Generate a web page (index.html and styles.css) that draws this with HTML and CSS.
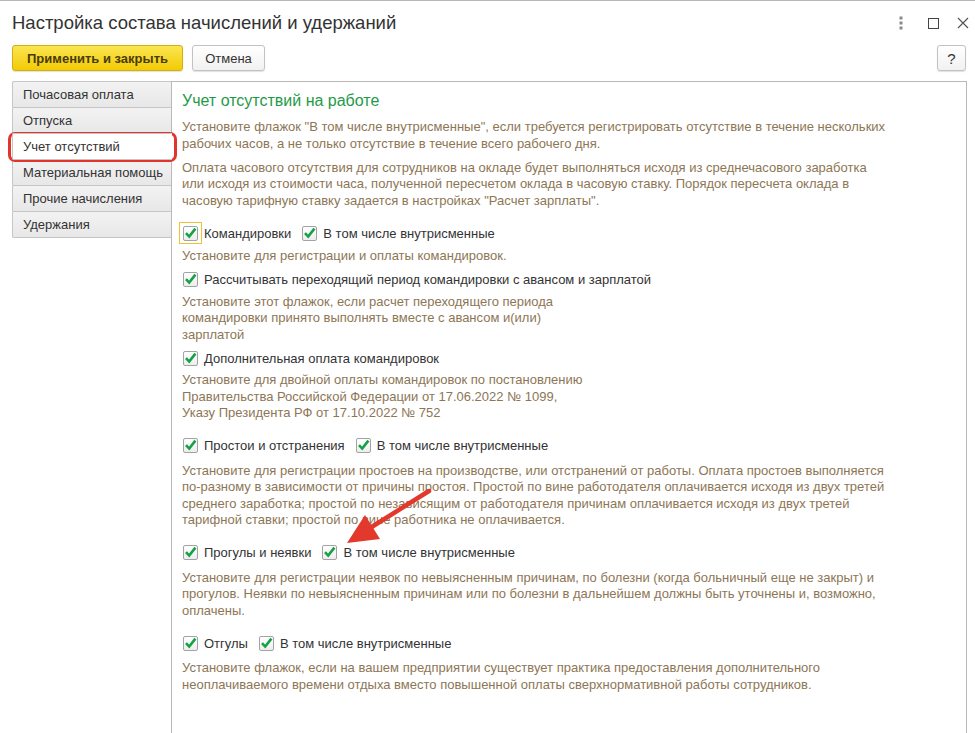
FILE: index.html
```html
<!DOCTYPE html>
<html lang="ru">
<head>
  <meta charset="UTF-8">
  <title>Настройка состава начислений и удержаний</title>
  <link rel="stylesheet" href="styles.css">
</head>
<body>
  <div class="window">
    <div class="titlebar">
      <h1>Настройка состава начислений и удержаний</h1>
      <div class="win-controls">
        <svg class="ico-more" width="6" height="14" viewBox="0 0 6 14">
          <rect x="1.5" y="0.5" width="3" height="3" fill="#8a8a8a"/>
          <rect x="1.5" y="5.5" width="3" height="3" fill="#8a8a8a"/>
          <rect x="1.5" y="10.5" width="3" height="3" fill="#8a8a8a"/>
        </svg>
        <span class="ico-max"></span>
        <svg class="ico-close" width="12" height="12" viewBox="0 0 12 12">
          <path d="M1 1 L11 11 M11 1 L1 11" stroke="#555" stroke-width="1.2"/>
        </svg>
      </div>
    </div>

    <div class="toolbar">
      <button class="btn btn-primary">Применить и закрыть</button>
      <button class="btn btn-cancel">Отмена</button>
      <button class="btn btn-help">?</button>
    </div>

    <div class="main">
      <ul class="tabs">
        <li class="tab">Почасовая оплата</li>
        <li class="tab">Отпуска</li>
        <li class="tab active">Учет отсутствий</li>
        <li class="tab">Материальная помощь</li>
        <li class="tab">Прочие начисления</li>
        <li class="tab">Удержания</li>
      </ul>

      <div class="panel">
        <h2>Учет отсутствий на работе</h2>
        <p class="note intro">Установите флажок "В том числе внутрисменные", если требуется регистрировать отсутствие в течение нескольких<br>рабочих часов, а не только отсутствие в течение всего рабочего дня.</p>
        <p class="note intro">Оплата часового отсутствия для сотрудников на окладе будет выполняться исходя из среднечасового заработка<br>или исходя из стоимости часа, полученной пересчетом оклада в часовую ставку. Порядок пересчета оклада в<br>часовую тарифную ставку задается в настройках "Расчет зарплаты".</p>

        <div class="group group-first">
          <div class="row">
            <span class="cb focus"><span class="box"><svg viewBox="0 0 15 15"><path d="M3 7.2 L6.2 10.6 L12.4 2.6"/></svg></span></span>
            <span class="label">Командировки</span>
            <span class="cb"><span class="box"><svg viewBox="0 0 15 15"><path d="M3 7.2 L6.2 10.6 L12.4 2.6"/></svg></span></span>
            <span class="label">В том числе внутрисменные</span>
          </div>
          <p class="note hint">Установите для регистрации и оплаты командировок.</p>

          <div class="row sub">
            <span class="cb"><span class="box"><svg viewBox="0 0 15 15"><path d="M3 7.2 L6.2 10.6 L12.4 2.6"/></svg></span></span>
            <span class="label">Рассчитывать переходящий период командировки с авансом и зарплатой</span>
          </div>
          <p class="note hint hint-tight">Установите этот флажок, если расчет переходящего периода<br>командировки принято выполнять вместе с авансом и(или)<br>зарплатой</p>

          <div class="row sub">
            <span class="cb"><span class="box"><svg viewBox="0 0 15 15"><path d="M3 7.2 L6.2 10.6 L12.4 2.6"/></svg></span></span>
            <span class="label">Дополнительная оплата командировок</span>
          </div>
          <p class="note hint hint-tight">Установите для двойной оплаты командировок по постановлению<br>Правительства Российской Федерации от 17.06.2022 № 1099,<br>Указу Президента РФ от 17.10.2022 № 752</p>
        </div>

        <div class="group">
          <div class="row">
            <span class="cb"><span class="box"><svg viewBox="0 0 15 15"><path d="M3 7.2 L6.2 10.6 L12.4 2.6"/></svg></span></span>
            <span class="label">Простои и отстранения</span>
            <span class="cb"><span class="box"><svg viewBox="0 0 15 15"><path d="M3 7.2 L6.2 10.6 L12.4 2.6"/></svg></span></span>
            <span class="label">В том числе внутрисменные</span>
          </div>
          <p class="note hint">Установите для регистрации простоев на производстве, или отстранений от работы. Оплата простоев выполняется<br>по-разному в зависимости от причины простоя. Простой по вине работодателя оплачивается исходя из двух третей<br>среднего заработка; простой по независящим от работодателя причинам оплачивается исходя из двух третей<br>тарифной ставки; простой по вине работника не оплачивается.</p>
        </div>

        <div class="group">
          <div class="row">
            <span class="cb"><span class="box"><svg viewBox="0 0 15 15"><path d="M3 7.2 L6.2 10.6 L12.4 2.6"/></svg></span></span>
            <span class="label">Прогулы и неявки</span>
            <span class="cb"><span class="box"><svg viewBox="0 0 15 15"><path d="M3 7.2 L6.2 10.6 L12.4 2.6"/></svg></span></span>
            <span class="label">В том числе внутрисменные</span>
          </div>
          <p class="note hint">Установите для регистрации неявок по невыясненным причинам, по болезни (когда больничный еще не закрыт) и<br>прогулов. Неявки по невыясненным причинам или по болезни в дальнейшем должны быть уточнены и, возможно,<br>оплачены.</p>
        </div>

        <div class="group">
          <div class="row">
            <span class="cb"><span class="box"><svg viewBox="0 0 15 15"><path d="M3 7.2 L6.2 10.6 L12.4 2.6"/></svg></span></span>
            <span class="label">Отгулы</span>
            <span class="cb"><span class="box"><svg viewBox="0 0 15 15"><path d="M3 7.2 L6.2 10.6 L12.4 2.6"/></svg></span></span>
            <span class="label">В том числе внутрисменные</span>
          </div>
          <p class="note hint">Установите флажок, если на вашем предприятии существует практика предоставления дополнительного<br>неоплачиваемого времени отдыха вместо повышенной оплаты сверхнормативной работы сотрудников.</p>
        </div>
      </div>
    </div>
  </div>

  <!-- annotation marks drawn over the form -->
  <div class="mark-tab"></div>
  <svg class="mark-arrow" width="975" height="733" viewBox="0 0 975 733">
    <line x1="429" y1="491" x2="370" y2="528" stroke="#e3382c" stroke-width="4.5" stroke-linecap="round"/>
    <polygon points="347,543 365,515 380,539" fill="#e3382c"/>
  </svg>
</body>
</html>
```

FILE: styles.css
```css
body {
  margin: 0;
  font-family: "Liberation Sans", Arial, sans-serif;
  font-size: 13px;
  color: #333;
  background: #fff;
  position: relative;
}
.window {
  height: 100vh;
  display: flex;
  flex-direction: column;
  border-top: 1px solid #b8b8b8;
  box-sizing: border-box;
  overflow: hidden;
}
.titlebar {
  height: 44px;
  flex-shrink: 0;
  display: flex;
  align-items: center;
  padding: 0 6px 0 12px;
}
.titlebar h1 {
  flex: 1;
  margin: 0;
  font-size: 18.5px;
  font-weight: normal;
  color: #333;
}
.win-controls {
  display: flex;
  align-items: center;
}
.ico-more {
  margin-right: 24px;
}
.ico-max {
  width: 9px;
  height: 9px;
  border: 1.3px solid #444;
  margin-right: 18px;
}
.toolbar {
  height: 26px;
  flex-shrink: 0;
  display: flex;
  gap: 9px;
  padding: 0 9px 0 12px;
  margin-bottom: 10px;
}
.btn {
  height: 26px;
  box-sizing: border-box;
  border: 1px solid #c2c2c2;
  border-radius: 3px;
  background: linear-gradient(#ffffff, #f1f1f1);
  box-shadow: 0 1px 1px rgba(0,0,0,0.12);
  font-family: "Liberation Sans", Arial, sans-serif;
  font-size: 13px;
  color: #333;
  padding: 0;
}
.btn-primary {
  width: 171px;
  background: linear-gradient(#fbe551, #f2cb05);
  border-color: #d2b012;
  font-weight: bold;
  color: #4a3c08;
}
.btn-cancel {
  width: 73px;
}
.btn-help {
  width: 29px;
  margin-left: auto;
  font-size: 15px;
}
.main {
  flex: 1;
  min-height: 0;
  display: flex;
  padding: 0 8px 0 12px;
}
.tabs {
  width: 159px;
  flex-shrink: 0;
  list-style: none;
  margin: 0;
  padding: 0;
}
.tab {
  height: 27px;
  box-sizing: border-box;
  border: 1px solid #c6c6c6;
  border-right: none;
  border-radius: 2px 0 0 2px;
  background: linear-gradient(#f3f3f3, #e7e7e7);
  padding-left: 10px;
  line-height: 25px;
  margin-bottom: -1px;
  color: #333;
}
.tab.active {
  background: #fff;
  margin-right: -1px;
  position: relative;
  z-index: 1;
}
.panel {
  flex: 1;
  border: 1px solid #b9b9b9;
  border-bottom: none;
  padding: 9px 10px 0 10px;
}
.panel h2 {
  margin: 0 0 8px;
  font-size: 16px;
  line-height: 20px;
  font-weight: normal;
  color: #1e9b48;
}
.panel p {
  margin: 0;
  line-height: 16.5px;
}
.note {
  color: #8d7655;
}
.panel .intro + .intro {
  margin-top: 7.5px;
}
.group {
  margin-top: 13px;
}
.row {
  height: 22px;
  display: flex;
  align-items: center;
}
.row.sub {
  margin-top: 4px;
}
.panel .hint {
  margin-top: 6px;
}
.panel .group-first .hint {
  margin-top: 4px;
}
.panel .group-first .hint-tight {
  margin-top: 3px;
}
.cb {
  width: 21px;
  height: 20px;
  border: 1px solid transparent;
  display: flex;
  align-items: center;
  justify-content: center;
  margin-left: -3px;
}
.cb.focus {
  border-color: #f0c232;
}
.box {
  width: 15px;
  height: 15px;
  box-sizing: border-box;
  border: 1px solid #a3a3a3;
  border-radius: 2px;
  background: linear-gradient(#fff, #ededed);
  position: relative;
}
.box svg {
  position: absolute;
  left: -1px;
  top: -1px;
  width: 15px;
  height: 15px;
}
.box path {
  fill: none;
  stroke: #17a04a;
  stroke-width: 2.6;
}
.label {
  margin-left: 2px;
  margin-right: 10px;
  white-space: nowrap;
}
.mark-tab {
  position: absolute;
  left: 8px;
  top: 132px;
  width: 163px;
  height: 24px;
  border: 3px solid #e3342b;
  border-radius: 7px;
}
.mark-arrow {
  position: absolute;
  left: 0;
  top: 0;
  pointer-events: none;
}
```
